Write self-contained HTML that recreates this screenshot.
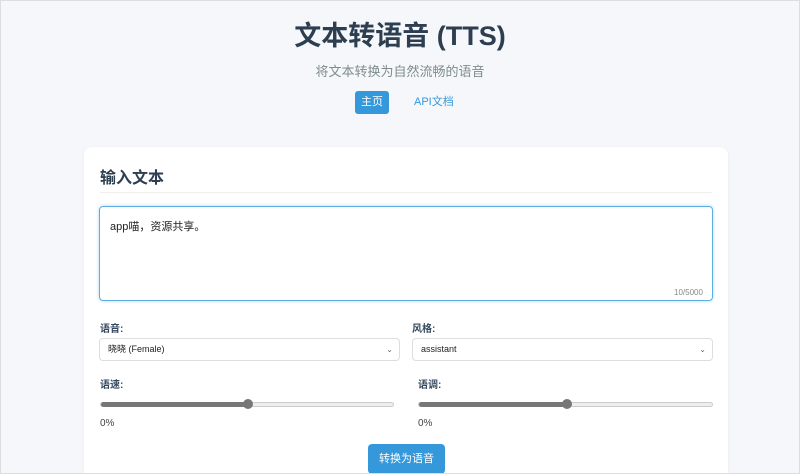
<!DOCTYPE html>
<html><head><meta charset="utf-8"><style>
*{box-sizing:border-box;margin:0;padding:0}
html{width:800px;height:474px;overflow:hidden}
body{width:800px;height:474px;overflow:hidden;background:#f5f7fa;font-family:"Liberation Sans","Noto Sans CJK SC",sans-serif;color:#2c3e50;position:relative}
.frame{position:absolute;left:0;top:0;width:800px;height:474px;border:1px solid #ddd;pointer-events:none}
.abs{position:absolute}
h1{position:absolute;top:14px;left:0;width:800px;text-align:center;font-size:27px;font-weight:bold;color:#2c3e50}
.sub{top:61px;left:0;width:800px;text-align:center;font-size:13px;color:#7f8c8d}
.nav1{left:355px;top:91px;width:34px;height:23px;background:#3498db;color:#fff;font-size:11px;border-radius:3px;text-align:center;line-height:23px}
.nav2{left:414px;top:91px;height:23px;line-height:23px;color:#3498db;font-size:11px}
.card{left:84px;top:147px;width:644px;height:327px;background:#fff;border-radius:8px 8px 0 0;box-shadow:0 1px 4px rgba(0,0,0,.05)}
.h2{left:100px;top:164px;font-size:16px;font-weight:bold}
.hr{left:100px;top:192px;width:612px;height:1px;background:#eee}
.ta{left:99px;top:206px;width:614px;height:95px;border:1px solid #5dade2;border-radius:4px;box-shadow:0 0 3px rgba(52,152,219,.4)}
.txt{left:110px;top:218px;font-size:11px;color:#222}
.cnt{left:674px;top:288px;font-size:8px;color:#888}
.lbl{font-size:10px;font-weight:bold;color:#34495e}
.sel{height:23px;border:1px solid #ddd;border-radius:4px;font-size:9px;color:#222;padding-left:8px;line-height:21px}
.sel span{position:absolute;right:6px;top:0;color:#666;font-size:8px}
.track{height:5px;border:1px solid #ccc;border-radius:3px;background:#eee}
.fill{position:absolute;left:0;top:-1px;height:5px;background:#777;border-radius:3px}
.thumb{position:absolute;top:-4px;width:10px;height:10px;border-radius:50%;background:#777}
.pct{font-size:10px;color:#444}
.btn{left:368px;top:444px;width:77px;height:30px;background:#3498db;color:#fff;font-size:11px;text-align:center;line-height:30px;border-radius:4px}
</style></head><body>
<h1>文本转语音 (TTS)</h1>
<div class="abs sub">将文本转换为自然流畅的语音</div>
<div class="abs nav1">主页</div>
<div class="abs nav2">API文档</div>
<div class="abs card"></div>
<div class="abs h2">输入文本</div>
<div class="abs hr"></div>
<div class="abs ta"></div>
<div class="abs txt">app喵，资源共享。</div>
<div class="abs cnt">10/5000</div>
<div class="abs lbl" style="left:100px;top:320px">语音:</div>
<div class="abs lbl" style="left:412px;top:320px">风格:</div>
<div class="abs sel" style="left:99px;top:338px;width:301px">晓晓 (Female)<span>⌄</span></div>
<div class="abs sel" style="left:412px;top:338px;width:301px">assistant<span>⌄</span></div>
<div class="abs lbl" style="left:100px;top:376px">语速:</div>
<div class="abs lbl" style="left:418px;top:376px">语调:</div>
<div class="abs track" style="left:100px;top:402px;width:294px"><div class="fill" style="width:147px"></div><div class="thumb" style="left:142px"></div></div>
<div class="abs track" style="left:418px;top:402px;width:295px"><div class="fill" style="width:148px"></div><div class="thumb" style="left:143px"></div></div>
<div class="abs pct" style="left:100px;top:418px">0%</div>
<div class="abs pct" style="left:418px;top:418px">0%</div>
<div class="abs btn">转换为语音</div>
<div class="frame"></div>
</body></html>
